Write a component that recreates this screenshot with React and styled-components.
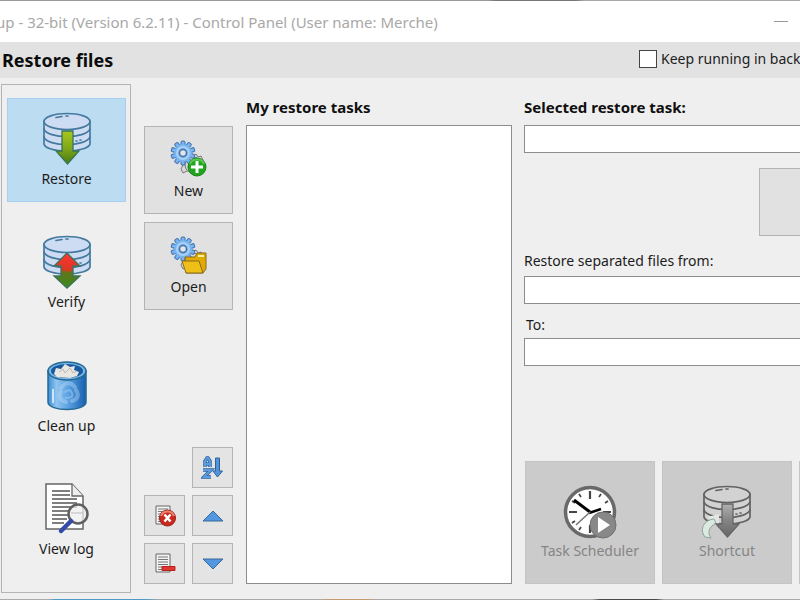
import React, { useId } from "react";
import styled, { createGlobalStyle } from "styled-components";

const Global = createGlobalStyle`
  *, *::before, *::after { box-sizing: border-box; }
  body {
    margin: 0;
    overflow: hidden;
    background: #efefef;
    color: #1c1c1c;
    font-family: "Noto Sans", "Open Sans", sans-serif;
    font-size: 14px;
    line-height: 20px;
  }
  button, input, select { font: inherit; color: inherit; margin: 0; border-radius: 0; }
`;

const Window = styled.div`
  display: flex;
  flex-direction: column;
  height: 100vh;
  overflow: hidden;
`;

const Edge = styled.div`
  flex: none;
  height: 1px;
  background: ${(p) => p.$fill};
`;

const TitleBar = styled.header`
  flex: none;
  display: flex;
  align-items: center;
  justify-content: space-between;
  height: 41px;
  padding-right: 12px;
  background: #fff;
  color: #a8a8a8;
  white-space: nowrap;
`;

const Title = styled.span`
  margin-left: -4px;
  font-size: 15px;
`;

const Minimize = styled.button`
  display: flex;
  padding: 0;
  border: 0;
  background: none;
  color: #999;
`;

const Banner = styled.div`
  flex: none;
  display: flex;
  align-items: center;
  justify-content: space-between;
  height: 36px;
  padding-left: 2px;
  background: #e2e2e2;
  white-space: nowrap;
`;

const Heading = styled.h1`
  margin: 0;
  color: #0c0c0c;
  font-size: 18px;
  font-weight: 700;
  line-height: 24px;
`;

const CheckLabel = styled.label`
  display: flex;
  flex: none;
  align-items: center;
  gap: 4px;
  width: 161px;
  padding-bottom: 2px;
`;

const CheckBox = styled.input`
  appearance: none;
  flex: none;
  width: 18px;
  height: 18px;
  border: 1px solid #444;
  background: #fff;
`;

const Main = styled.main`
  flex: 1;
  display: flex;
  min-height: 0;
  padding: 6px 0 6px 1px;
`;

const Nav = styled.nav`
  flex: none;
  display: flex;
  flex-direction: column;
  justify-content: space-between;
  width: 130px;
  padding: 13px 4px 20px 5px;
  border: 1px solid #b4b4b4;
`;

const NavButton = styled.button`
  display: flex;
  flex-direction: column;
  align-items: center;
  gap: 2px;
  height: 104px;
  padding: 12px 0 0;
  border: 1px solid ${(p) => (p.$active ? "#a5cff0" : "transparent")};
  background: ${(p) => (p.$active ? "#bcdcf2" : "transparent")};
`;

const Tools = styled.div`
  flex: none;
  display: flex;
  flex-direction: column;
  justify-content: space-between;
  width: 89px;
  margin: 42px 13px 9px;
`;

const Stack = styled.div`
  display: flex;
  flex-direction: column;
  gap: 8px;
`;

const ToolButton = styled.button`
  display: flex;
  flex-direction: column;
  align-items: center;
  height: 88px;
  padding: 12px 0 0;
  border: 1px solid #b4b4b4;
  background: #e1e1e1;
`;

const SmallGrid = styled.div`
  display: grid;
  grid-template-columns: 41px 41px;
  justify-content: space-between;
  row-gap: 7px;
`;

const SmallButton = styled.button`
  display: flex;
  grid-column: ${(p) => p.$column};
  align-items: center;
  justify-content: center;
  height: 41px;
  padding: 0;
  border: 1px solid #b4b4b4;
  background: #e4e4e4;
`;

const ListColumn = styled.section`
  flex: none;
  display: flex;
  flex-direction: column;
  width: 266px;
  padding: 13px 0 9px;
`;

const StrongLabel = styled.label`
  margin-bottom: 8px;
  color: #101010;
  font-size: 15px;
  font-weight: 700;
`;

const TaskList = styled.select`
  appearance: none;
  flex: 1;
  width: 100%;
  padding: 0;
  border: 1px solid #8c8c8c;
  background: #fff;
`;

const Details = styled.section`
  flex: 1;
  display: flex;
  flex-direction: column;
  min-width: 0;
  margin-left: 12px;
  padding: 13px 0 9px;
`;

const FieldLabel = styled.label`
  padding-left: ${(p) => (p.$indent ? "2px" : "0")};
  margin-bottom: ${(p) => (p.$indent ? "3px" : "5px")};
`;

const Field = styled.input`
  flex: none;
  width: 100%;
  height: 28px;
  padding: 0 6px;
  border: 1px solid #8c8c8c;
  border-right: 0;
  background: #fff;
`;

const StartButton = styled.button`
  flex: none;
  align-self: flex-end;
  width: 41px;
  height: 68px;
  margin: 15px 0;
  border: 1px solid #b4b4b4;
  border-right: 0;
  background: #e1e1e1;
`;

const Spacer = styled.div`
  flex: none;
  height: 11px;
`;

const Actions = styled.div`
  display: flex;
  gap: 7px;
  margin-top: auto;
  padding-left: 1px;
  overflow: hidden;
`;

const ActionButton = styled.button`
  flex: none;
  display: flex;
  flex-direction: column;
  align-items: center;
  gap: 1px;
  width: 130px;
  height: 123px;
  padding: 22px 0 0;
  border: 1px solid #c4c4c4;
  background: #cbcbcb;

  &:disabled { color: #858585; }
`;

/* Banded cylinder shared by the restore, verify and shortcut drawings */
function Cylinder({ stroke, fill }) {
  return (
    <g fill={fill} stroke={stroke} strokeWidth="1.7" strokeLinecap="round">
      <path d="M3 10v23c1 4 10 7 22.500 7S48 37 49 33V10" />
      <ellipse cx="26" cy="10.500" rx="23" ry="8" />
      <path fill="none" d="M3 18c3 10 42 10 46 0M3 26c3 10 42 10 46 0" />
      <path fill="none" d="M15 6.500l6-1M25 5h2M35 30h1M39 29h1" />
    </g>
  );
}

function DatabaseIcon({ kind }) {
  const id = useId();
  const gray = kind === "shortcut";
  const stroke = gray ? "#626262" : "#447a9e";
  const colors = {
    restore: ["#a9c81c", "#83aa19", "#477b10"],
    verify: ["#ff3434", "#da3824", "#398a19"],
    shortcut: ["#b0b0b0", "#858585", "#666666"],
  }[kind];
  return (
    <svg width="52" height="56" viewBox="0 0 52 56" aria-hidden="true">
      <defs>
        <linearGradient id={id} x1="0" y1="0" x2="0" y2="1">
          <stop offset="0" stopColor={colors[0]} />
          <stop offset=".48" stopColor={colors[1]} />
          {kind === "verify" && <stop offset=".56" stopColor="#60751b" />}
          <stop offset="1" stopColor={colors[2]} />
        </linearGradient>
      </defs>
      <Cylinder stroke={stroke} fill={gray ? "#d2d2d2" : "#cddcf3"} />
      {gray && (
        <g>
          <path d="M6 33l12-3v12l-5-3z" fill="#e2e6e3" />
          <path d="M13 35C3 36-2 45 4 53l6 1c-4-6-2-11 5-15z" fill="#dce9e0" stroke="#8ba697" />
        </g>
      )}
      <path
        d={kind === "verify"
          ? "M26 19l13 13h-7v10h7L26 54 13 42h7V32h-7z"
          : "M21 20h11v20h6L26.500 53 15 40h6z"}
        fill={`url(#${id})`}
        stroke={gray ? "#666" : "#39745b"}
        strokeWidth="1.300"
      />
    </svg>
  );
}

function BinIcon() {
  const id = useId();
  return (
    <svg width="52" height="56" viewBox="0 0 52 56" aria-hidden="true">
      <defs>
        <linearGradient id={id}>
          <stop offset="0" stopColor="#398cd3" />
          <stop offset=".22" stopColor="#91c4f1" />
          <stop offset=".55" stopColor="#589fe0" />
          <stop offset="1" stopColor="#175faf" />
        </linearGradient>
      </defs>
      <path d="M7 13v31c0 10 38 10 38 0V13z" fill={`url(#${id})`} stroke="#236992" strokeWidth="1.500" />
      <ellipse cx="26" cy="13" rx="19" ry="9" fill="#79b6e7" stroke="#236992" strokeWidth="1.500" />
      <ellipse cx="26" cy="13" rx="16" ry="7" fill="#175a9d" />
      <path d="M13 16l2-6 5 1 4-5 5 3 5-1-1 4 5 2-2 4-7 2-13-1z" fill="#e8e6e1" />
      <path d="M18 14l4-3 2 4 5-5 3 5 4-2" fill="none" stroke="#bab9b8" />
      <path d="M12 31v14" stroke="#e3f4ff" strokeWidth="2" opacity=".8" />
      <g fill="none" stroke="#b8dcf6" strokeLinecap="round" opacity=".4">
        <path strokeWidth="4" d="M20 30q7-9 14-1M35 32q5 8-4 11M25 44q-9-3-5-10" />
        <path strokeWidth="2" d="M24 34q5-4 7 1t-6 5" />
      </g>
    </svg>
  );
}

function LogIcon() {
  return (
    <svg width="52" height="56" viewBox="0 0 52 56" aria-hidden="true">
      <path d="M5 3h26l11 12v33H5z" fill="#fff" stroke="#666" strokeWidth="1.500" />
      <path d="M31 3v12h11" fill="#eee" stroke="#666" strokeWidth="1.300" />
      <path d="M11 10h18M11 14h18M11 18h25M11 22h25M11 26h25M11 30h17M11 34h16M11 38h15M11 42h12" stroke="#555" strokeWidth="1.300" />
      <circle cx="37" cy="33" r="9.500" fill="#ededed" fillOpacity=".75" stroke="#606060" strokeWidth="2.500" />
      <path d="M30 32h12" stroke="#bbb" />
      <path d="M30 40L20 50" stroke="#354ba8" strokeWidth="4.500" strokeLinecap="round" />
    </svg>
  );
}

const cogTeeth = [0, 36, 72, 108, 144, 180, 216, 252, 288, 324];

function CogIcon({ kind }) {
  return (
    <svg width="38" height="42" viewBox="0 0 38 42" aria-hidden="true">
      <g fill="#d8d8d8" stroke="#777">
        <path d="M23 17l3-2 2 3 3-1 2 4-2 4-14 7-4 2-2-4 2-4 4-1z" />
        <circle cx="23" cy="26" r="8" />
      </g>
      <g fill="#79b4f0" stroke="#3f73ae">
        {cogTeeth.map((a) => (
          <rect key={a} x="11" y="2" width="4" height="6" rx="1" transform={`rotate(${a} 13 14)`} />
        ))}
      </g>
      <circle cx="13" cy="14" r="9" fill="#79b4f0" />
      <circle cx="13" cy="14" r="6" fill="none" stroke="#a9d0f5" strokeWidth="2" />
      <circle cx="13" cy="14" r="3.500" fill="#e4e4e4" stroke="#3f73ae" strokeWidth="1.500" />
      {kind === "new" ? (
        <g>
          <circle cx="27" cy="28" r="9" fill="#21a51f" stroke="#168416" />
          <path d="M20 25c2-6 12-6 14 0" fill="none" stroke="#58c850" strokeWidth="2" />
          <path d="M27 22v12M21 28h12" stroke="#fff" strokeWidth="3" />
        </g>
      ) : (
        <g stroke="#8a6b20" strokeLinejoin="round">
          <path d="M15 22h10l2-4h9v16l-3 4H16z" fill="#e0aa00" />
          <path d="M28 21h6" stroke="#fff2a0" strokeWidth="2" />
          <path d="M12 26h17l4 12H16z" fill="#eebf16" />
        </g>
      )}
    </svg>
  );
}

function SortIcon() {
  return (
    <svg width="24" height="24" viewBox="0 0 24 24" fill="none" aria-hidden="true">
      <g stroke="#2f6299" strokeWidth="3.500">
        <path d="M4 11V5l2-3h1l2 3v6M4 8h5M2 14h8l-7 7h7" />
      </g>
      <g stroke="#5b9ce0" strokeWidth="2">
        <path d="M4 11V5l2-3h1l2 3v6M4 8h5M2 14h8l-7 7h7" />
      </g>
      <path d="M14.500 2h4v13h3L16.500 21 12 15h2.500z" fill="#5294dc" stroke="#2f6299" />
    </svg>
  );
}

function Triangle({ down }) {
  return (
    <svg width="22" height="12" viewBox="0 0 22 12" aria-hidden="true">
      <path d={down ? "M1 1h20L11 11z" : "M1 11h20L11 1z"} fill="#5297df" stroke="#376998" />
    </svg>
  );
}

function ListIcon({ removeAll }) {
  return (
    <svg width="24" height="24" viewBox="0 0 24 24" aria-hidden="true">
      <path d="M3 2h14v18H3z" fill="#f4f4f4" stroke="#666" />
      <path d="M5 5h10M5 7.500h10M5 10h10M5 12.500h10M5 15h10M5 17.500h7" stroke="#777" />
      {removeAll ? (
        <g>
          <circle cx="14.500" cy="14" r="8" fill="#c92a20" stroke="#9e1d16" />
          <path d="M8 12c2-6 11-6 13 0" fill="none" stroke="#ef8170" strokeWidth="2" />
          <path d="M11.500 10.500l6 7M17.500 10.500l-6 7" stroke="#fff" strokeWidth="2.500" />
        </g>
      ) : (
        <path d="M9 14.500h13v4H9z" fill="#dc3830" stroke="#b7221c" />
      )}
    </svg>
  );
}

function ClockIcon() {
  return (
    <svg width="56" height="56" viewBox="0 0 56 56" aria-hidden="true">
      <circle cx="28" cy="28" r="24.500" fill="#fff" stroke="#696969" strokeWidth="3.500" />
      <g stroke="#444" strokeWidth="2.200">
        <path d="M28 7v8M28 41v8M7 28h8M41 28h8" />
        <path strokeWidth="1.700" d="M17 10l2 3M10 17l3 2M39 10l-2 3M46 17l-3 2M10 39l3-2M17 46l2-3" />
      </g>
      <path d="M28 28L12 16" stroke="#000" strokeWidth="3" />
      <path d="M27 29l12-4" stroke="#000" strokeWidth="2.500" />
      <path d="M28 28L14 41" stroke="#777" strokeWidth="1.500" />
      <circle cx="41" cy="41" r="13" fill="#888" stroke="#707070" />
      <path d="M36 33v16l12-8z" fill="#fff" />
    </svg>
  );
}

const navItems = [
  { label: "Restore", icon: <DatabaseIcon kind="restore" />, active: true },
  { label: "Verify", icon: <DatabaseIcon kind="verify" /> },
  { label: "Clean up", icon: <BinIcon /> },
  { label: "View log", icon: <LogIcon /> },
];

export default function App() {
  return (
    <>
      <Global />
      <Window>
        <Edge $fill="linear-gradient(90deg, #999 61%, #777 62%, #777 72%, #aaa 73%)" />
        <TitleBar>
          <Title>up - 32-bit (Version 6.2.11) - Control Panel (User name: Merche)</Title>
          <Minimize type="button" aria-label="Minimize">
            <svg width="14" height="2" aria-hidden="true"><path d="M0 .5h14" stroke="currentColor" /></svg>
          </Minimize>
        </TitleBar>
        <Banner>
          <Heading>Restore files</Heading>
          <CheckLabel><CheckBox type="checkbox" />Keep running in back</CheckLabel>
        </Banner>
        <Main>
          <Nav aria-label="Sections">
            {navItems.map((item) => (
              <NavButton key={item.label} type="button" $active={item.active}>
                {item.icon}
                {item.label}
              </NavButton>
            ))}
          </Nav>
          <Tools>
            <Stack>
              <ToolButton type="button"><CogIcon kind="new" />New</ToolButton>
              <ToolButton type="button"><CogIcon kind="open" />Open</ToolButton>
            </Stack>
            <SmallGrid>
              <SmallButton type="button" $column={2} aria-label="Sort"><SortIcon /></SmallButton>
              <SmallButton type="button" $column={1} aria-label="Remove all"><ListIcon removeAll /></SmallButton>
              <SmallButton type="button" $column={2} aria-label="Move up"><Triangle /></SmallButton>
              <SmallButton type="button" $column={1} aria-label="Remove"><ListIcon /></SmallButton>
              <SmallButton type="button" $column={2} aria-label="Move down"><Triangle down /></SmallButton>
            </SmallGrid>
          </Tools>
          <ListColumn>
            <StrongLabel htmlFor="tasks">My restore tasks</StrongLabel>
            <TaskList id="tasks" multiple />
          </ListColumn>
          <Details>
            <StrongLabel htmlFor="selected">Selected restore task:</StrongLabel>
            <Field id="selected" type="text" />
            <StartButton type="button" aria-label="Start restore" />
            <FieldLabel htmlFor="from">Restore separated files from:</FieldLabel>
            <Field id="from" type="text" />
            <Spacer />
            <FieldLabel htmlFor="to" $indent>To:</FieldLabel>
            <Field id="to" type="text" />
            <Actions>
              <ActionButton type="button" disabled><ClockIcon />Task Scheduler</ActionButton>
              <ActionButton type="button" disabled><DatabaseIcon kind="shortcut" />Shortcut</ActionButton>
              <ActionButton type="button" disabled aria-label="More" />
            </Actions>
          </Details>
        </Main>
        <Edge $fill="linear-gradient(90deg, #aaa 6%, #4c9ac8 7%, #4c9ac8 18%, #aaa 20%, #aaa 40%, #c59a70 41%, #c59a70 46%, #aaa 47%, #aaa 74%, #484848 75%, #484848 82%, #aaa 83%)" />
      </Window>
    </>
  );
}
